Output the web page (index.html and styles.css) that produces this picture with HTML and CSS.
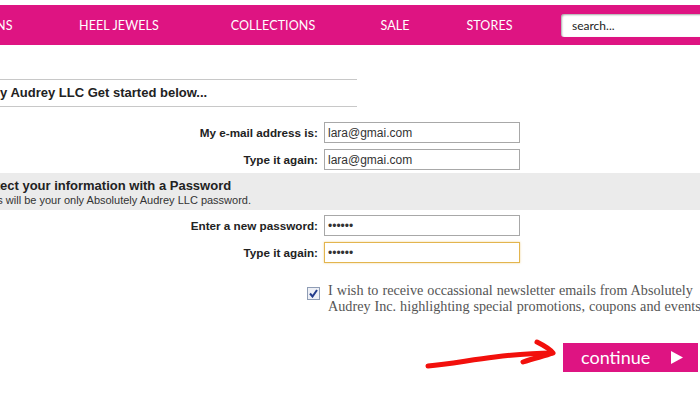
FILE: index.html
```html
<!DOCTYPE html>
<html lang="en">
<head>
    <meta charset="UTF-8">
    <meta name="viewport" content="width=device-width, initial-scale=1.0">
    <title>Create Account - Absolutely Audrey</title>
    <link rel="stylesheet" href="styles.css">
</head>
<body>
    <div class="page">
        <div class="topbar">
            <ul class="menu">
                <li><a href="#">DESIGNS</a></li>
                <li><a href="#">HEEL JEWELS</a></li>
                <li><a href="#">COLLECTIONS</a></li>
                <li><a href="#">SALE</a></li>
                <li><a href="#">STORES</a></li>
            </ul>
            <input class="search" type="text" placeholder="search...">
        </div>

        <form class="signup">
            <h2 class="intro">Welcome to Absolutely Audrey LLC Get started below...</h2>

            <div class="field">
                <label>My e-mail address is:</label>
                <input type="text" value="lara@gmai.com">
            </div>
            <div class="field">
                <label>Type it again:</label>
                <input type="text" value="lara@gmai.com">
            </div>

            <div class="band">
                <h3>Protect your information with a Password</h3>
                <p>This will be your only Absolutely Audrey LLC password.</p>
            </div>

            <div class="field">
                <label>Enter a new password:</label>
                <input type="password" value="secret">
            </div>
            <div class="field">
                <label>Type it again:</label>
                <input type="password" value="secret" class="active">
            </div>

            <div class="newsletter">
                <span class="check">
                    <svg width="9" height="9" viewBox="0 0 9 9"><path d="M1 4.5 L3.5 7.5 L8 1" fill="none" stroke="#233c8c" stroke-width="2"/></svg>
                </span>
                <p>I wish to receive occassional newsletter emails from Absolutely Audrey Inc. highlighting special promotions, coupons and events.</p>
            </div>

            <div class="actions">
                <svg class="scribble" width="135" height="35" viewBox="0 0 135 35">
                    <path d="M3 31 C 25 29, 45 25, 70 22 C 95 19, 112 18, 127 18" fill="none" stroke="#f2100c" stroke-width="5" stroke-linecap="round"/>
                    <path d="M112 7 C 120 11, 125 14, 128 18 C 120 21, 110 23, 98 27" fill="none" stroke="#f2100c" stroke-width="5" stroke-linecap="round" stroke-linejoin="round"/>
                </svg>
                <button type="button" class="continue">
                    continue
                    <svg width="12" height="13" viewBox="0 0 12 13"><polygon points="0,0 12,6.5 0,13" fill="#fff"/></svg>
                </button>
            </div>
        </form>
    </div>
</body>
</html>
```

FILE: styles.css
```css
body {
    margin: 0;
    padding-top: 5px;
    background-color: #fff;
    font-family: Arial, "Liberation Sans", sans-serif;
    color: #222;
    overflow: hidden;
}
.page {
    margin-left: -140px;
    width: 1000px;
}
.topbar {
    height: 40px;
    background-color: #de1482;
    display: flex;
    align-items: center;
}
.menu {
    list-style: none;
    margin: 0;
    padding: 0 0 0 68px;
    display: grid;
    grid-template-columns: 116px 150px 158px 86px 103px;
}
.menu li {
    text-align: center;
}
.menu a {
    font-family: Lato, sans-serif;
    font-size: 12.5px;
    letter-spacing: 0.1px;
    color: #fff;
    text-decoration: none;
}
.search {
    margin-left: 20px;
    width: 170px;
    height: 23px;
    box-sizing: border-box;
    border: none;
    border-radius: 3px;
    padding: 0 11px;
    font-family: Lato, sans-serif;
    font-size: 12px;
    box-shadow: inset 1px 1px 2px rgba(0, 0, 0, 0.35);
}
.search::placeholder {
    color: #222;
}
.signup {
    margin: 0;
}
.intro {
    width: 492px;
    margin: 34px 0 15px;
    padding: 0 0 0 5px;
    height: 26px;
    line-height: 26px;
    font-size: 13px;
    font-weight: bold;
    border-top: 1px solid #c8c8c8;
    border-bottom: 1px solid #c8c8c8;
}
.field {
    width: 660px;
    display: flex;
    justify-content: flex-end;
    align-items: center;
    gap: 6px;
    margin-bottom: 6px;
}
.field label {
    font-size: 11.7px;
    font-weight: bold;
    color: #222;
}
.field input {
    width: 196px;
    height: 21px;
    box-sizing: border-box;
    border: 1px solid #a8a8a8;
    padding: 0 3px;
    font-family: Arial, "Liberation Sans", sans-serif;
    font-size: 12px;
    color: #333;
}
.field input.active {
    border-color: #e3b54e;
    box-shadow: 0 0 2px rgba(227, 181, 78, 0.6);
}
.band {
    background-color: #ebebeb;
    margin: -3px 0 5px;
    padding: 5px 0 3px 114px;
}
.band h3 {
    margin: 0;
    font-size: 13px;
    line-height: 15px;
}
.band p {
    margin: 0;
    padding-left: 8px;
    font-size: 11px;
    line-height: 14px;
    color: #333;
}
.newsletter {
    display: flex;
    align-items: flex-start;
    gap: 8px;
    margin: 19px 0 0 447px;
}
.check {
    width: 11px;
    height: 11px;
    margin-top: 5px;
    border: 1px solid #8f9db5;
    background-color: #eef0f6;
    display: flex;
    align-items: center;
    justify-content: center;
}
.newsletter p {
    width: 400px;
    margin: 0;
    font-family: "Liberation Serif", serif;
    font-size: 14.2px;
    line-height: 16px;
    word-spacing: 0.4px;
    color: #555;
}
.actions {
    position: relative;
    margin: 29px 0 0 703px;
}
.scribble {
    position: absolute;
    left: -138px;
    top: -8px;
}
.continue {
    width: 135px;
    height: 29px;
    border: none;
    background-color: #de1482;
    color: #fff;
    font-family: Lato, sans-serif;
    font-size: 18px;
    display: flex;
    align-items: center;
    justify-content: space-between;
    padding: 0 15px 1px 18px;
}
```
